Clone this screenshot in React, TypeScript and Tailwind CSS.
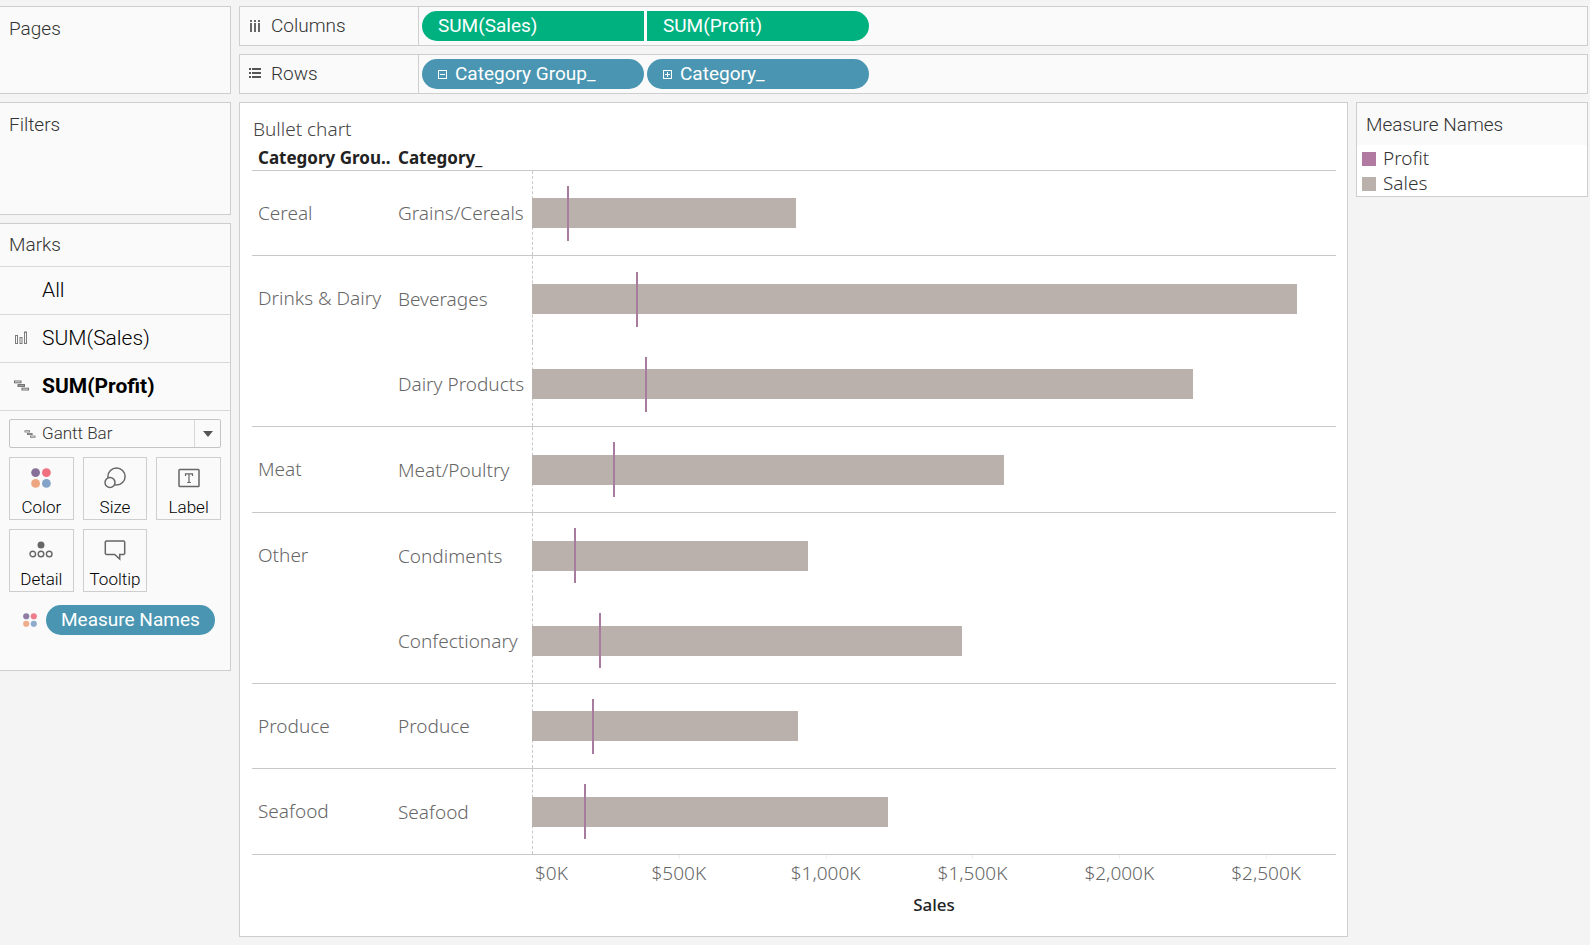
import { useState } from 'react'

const rows = [
  { group: 'Cereal', span: 1, category: 'Grains/Cereals', sales: 899, profit: 119 },
  { group: 'Drinks & Dairy', span: 2, category: 'Beverages', sales: 2605, profit: 354 },
  { group: '', span: 0, category: 'Dairy Products', sales: 2251, profit: 385 },
  { group: 'Meat', span: 1, category: 'Meat/Poultry', sales: 1607, profit: 276 },
  { group: 'Other', span: 2, category: 'Condiments', sales: 940, profit: 143 },
  { group: '', span: 0, category: 'Confectionary', sales: 1464, profit: 228 },
  { group: 'Produce', span: 1, category: 'Produce', sales: 906, profit: 204 },
  { group: 'Seafood', span: 1, category: 'Seafood', sales: 1212, profit: 177 },
]

const AXIS_MAX = 2738
const ticks = [500, 1000, 1500, 2000, 2500]
const pct = (v: number) => `${(v / AXIS_MAX) * 100}%`

function DotsIcon({ className }: { className?: string }) {
  return (
    <svg viewBox="0 0 20 20" className={className} aria-hidden="true">
      <circle cx="4.6" cy="4.6" r="4.4" fill="#86709a" />
      <circle cx="15.4" cy="4.6" r="4.4" fill="#f0707f" />
      <circle cx="4.6" cy="15.4" r="4.4" fill="#eea680" />
      <circle cx="15.4" cy="15.4" r="4.4" fill="#83a3c8" />
    </svg>
  )
}

function SizeIcon() {
  return (
    <svg viewBox="0 0 22 22" className="h-[22px] w-[22px]" fill="#fafafa" stroke="#666" strokeWidth="1.5" aria-hidden="true">
      <circle cx="12.5" cy="9.5" r="8.6" />
      <circle cx="6" cy="15.5" r="5" />
    </svg>
  )
}

function LabelIcon() {
  return (
    <svg viewBox="0 0 22 22" className="h-[22px] w-[22px]" fill="none" stroke="#666" aria-hidden="true">
      <rect x="1" y="2.5" width="20" height="17" rx="0.8" strokeWidth="1.5" />
      <path d="M7.5 9V6.8h7V9M11 6.8v8.7M9.2 15.5h3.6" strokeWidth="1.2" />
    </svg>
  )
}

function DetailIcon() {
  return (
    <svg viewBox="0 0 24 20" className="h-5 w-6" fill="none" stroke="#666" strokeWidth="1.4" aria-hidden="true">
      <circle cx="12" cy="5" r="3.5" fill="#666" stroke="none" />
      <circle cx="3.8" cy="14" r="2.8" />
      <circle cx="12" cy="14" r="2.8" />
      <circle cx="20.2" cy="14" r="2.8" />
    </svg>
  )
}

function TooltipIcon() {
  return (
    <svg viewBox="0 0 22 22" className="h-[22px] w-[22px]" fill="none" stroke="#666" strokeWidth="1.5" aria-hidden="true">
      <path d="M2.5 2h17a1.2 1.2 0 0 1 1.2 1.2v11a1.2 1.2 0 0 1-1.2 1.2h-3.8v4.6l-5-4.6H2.5a1.2 1.2 0 0 1-1.2-1.2v-11A1.2 1.2 0 0 1 2.5 2z" />
    </svg>
  )
}

function BarsIcon() {
  return (
    <svg viewBox="0 0 13 13" className="h-[13px] w-[13px]" fill="#fafafa" stroke="#7c7c7c" aria-hidden="true">
      <rect x="0.5" y="4.5" width="2" height="8" />
      <rect x="5" y="6.5" width="2" height="6" />
      <rect x="9.5" y="1" width="2" height="11.5" />
    </svg>
  )
}

function GanttIcon({ className }: { className?: string }) {
  return (
    <svg viewBox="0 0 15 11" className={className} fill="#fafafa" stroke="#6e6e6e" aria-hidden="true">
      <rect x="0.5" y="1" width="6.5" height="1.8" />
      <rect x="4" y="4.6" width="6.5" height="1.8" fill="#aaa" />
      <rect x="8" y="8.2" width="6.5" height="1.8" />
    </svg>
  )
}

function ColumnsIcon() {
  return (
    <svg viewBox="0 0 12 12" className="h-3 w-3" fill="#666" aria-hidden="true">
      {[1, 5, 9].map(x => (
        <g key={x}>
          <rect x={x} y="0" width="2" height="2" />
          <rect x={x} y="3" width="2" height="9" />
        </g>
      ))}
    </svg>
  )
}

function RowsIcon() {
  return (
    <svg viewBox="0 0 12 12" className="h-3 w-3" fill="#555" aria-hidden="true">
      {[0, 4, 8].map(y => (
        <g key={y}>
          <rect x="0" y={y} width="2" height="2" />
          <rect x="3" y={y} width="9" height="2" />
        </g>
      ))}
    </svg>
  )
}

function ExpandIcon({ open }: { open: boolean }) {
  return (
    <svg viewBox="0 0 9 9" className="h-[9px] w-[9px]" fill="none" stroke="#fff" aria-hidden="true">
      <rect x="0.5" y="0.5" width="8" height="8" />
      <path d={open ? 'M2 4.5h5' : 'M2 4.5h5M4.5 2v5'} />
    </svg>
  )
}

function Shelf({ icon, label, children }: { icon: React.ReactNode; label: string; children: React.ReactNode }) {
  return (
    <section className="flex h-10 border border-[#cecece] bg-[#fafafa]">
      <h2 className="flex w-[179px] items-center gap-[10px] border-r border-[#cecece] pl-[9px]">
        {icon}
        {label}
      </h2>
      <div className="flex items-center gap-[3px] pl-[3px]">{children}</div>
    </section>
  )
}

const markButtons = [
  { label: 'Color', icon: <DotsIcon className="h-5 w-5" /> },
  { label: 'Size', icon: <SizeIcon /> },
  { label: 'Label', icon: <LabelIcon /> },
  { label: 'Detail', icon: <DetailIcon /> },
  { label: 'Tooltip', icon: <TooltipIcon /> },
]

function MarksCard() {
  const [active, setActive] = useState('SUM(Profit)')
  const layers = [
    { label: 'All', icon: null },
    { label: 'SUM(Sales)', icon: <BarsIcon /> },
    { label: 'SUM(Profit)', icon: <GanttIcon className="h-[11px] w-[15px]" /> },
  ]

  return (
    <section className="border border-l-0 border-[#cecece] bg-[#fafafa] pb-[35px]">
      <h2 className="flex h-[42px] items-center pl-[9px]">Marks</h2>
      {layers.map(l => (
        <button
          key={l.label}
          type="button"
          onClick={() => setActive(l.label)}
          className={`flex h-12 w-full items-center border-t border-[#d8d8d8] pb-[2px] text-[21px] text-black ${active === l.label ? 'font-bold' : 'font-light'}`}
        >
          <span className="flex w-[42px] justify-center">{l.icon}</span>
          {l.label}
        </button>
      ))}
      <div className="border-t border-[#d8d8d8] px-[9px] pt-2">
        <div className="relative flex h-[29px] items-center rounded-xs border border-[#c4c4c4]">
          <select
            aria-label="Mark type"
            className="h-full w-full appearance-none bg-transparent pb-px pl-8 text-[17px] font-light text-[#333] outline-none"
          >
            <option>Gantt Bar</option>
          </select>
          <GanttIcon className="pointer-events-none absolute left-[14px] h-2 w-3" />
          <span className="pointer-events-none absolute right-0 flex h-full w-[26px] items-center justify-center border-l border-[#d8d8d8]">
            <svg viewBox="0 0 10 6" className="h-[6px] w-[10px]" fill="#555" aria-hidden="true">
              <path d="M0 0h10L5 6z" />
            </svg>
          </span>
        </div>
        <div className="mt-[9px] grid grid-cols-3 gap-[9px]">
          {markButtons.map(b => (
            <button
              key={b.label}
              type="button"
              className="flex h-[63px] flex-col items-center border border-[#cecece] text-[17px] leading-5 font-light text-black"
            >
              <span className="flex h-[39px] items-center">{b.icon}</span>
              {b.label}
            </button>
          ))}
        </div>
        <div className="mt-[13px] flex items-center gap-[9px] pl-[14px]">
          <DotsIcon className="h-[14px] w-[14px] shrink-0 opacity-90" />
          <button type="button" className="h-[30px] rounded-full bg-[#4a96b2] px-[15px] font-normal whitespace-nowrap text-white">
            Measure Names
          </button>
        </div>
      </div>
    </section>
  )
}

function BulletChart() {
  return (
    <main className="min-w-0 flex-1 border border-[#cecece] bg-white pt-[14px] pr-[11px] pb-[19px] pl-3 font-['Noto_Sans',sans-serif] text-[19px] leading-6 font-light text-[#666]">
      <h1 className="pl-px text-[#444]">Bullet chart</h1>
      <table className="mt-1 w-full table-fixed border-separate border-spacing-0 text-left">
        <thead className="text-[17px] font-medium text-[#222]">
          <tr>
            <th className="h-[26px] w-[140px] border-b border-[#c8c8c8] pl-[6px] whitespace-nowrap">Category Grou..</th>
            <th className="w-[140px] border-b border-[#c8c8c8] pl-[6px]">Category_</th>
            <th className="border-b border-[#c8c8c8]" aria-label="Sales and profit" />
          </tr>
        </thead>
        <tbody>
          {rows.map((r, i) => {
            const last = i === rows.length - 1 || rows[i + 1].span > 0
            const line = last ? 'border-b border-[#c8c8c8]' : ''
            return (
              <tr key={r.category} className="h-[85px] even:h-[86px]">
                {r.span > 0 && (
                  <th rowSpan={r.span} className="border-b border-[#c8c8c8] pl-[6px] align-top font-light">
                    <div className="flex h-[84px] items-center">{r.group}</div>
                  </th>
                )}
                <td className={`pl-[6px] whitespace-nowrap ${line}`}>{r.category}</td>
                <td className={`relative ${line}`}>
                  <span className="absolute inset-y-0 left-0 border-l border-dashed border-[#c8c8c8]" />
                  <div className="relative flex h-[55px] items-center">
                    <div className="h-[30px] bg-[#bab0ac]" style={{ width: pct(r.sales) }} />
                    <span className="absolute inset-y-0 w-[2px] bg-[#a87c9f]" style={{ left: pct(r.profit) }} />
                  </div>
                </td>
              </tr>
            )
          })}
        </tbody>
      </table>
      <div className="relative ml-[280px] h-[38px] pt-[6px]">
        <span className="pl-[3px]">$0K</span>
        {ticks.map(t => (
          <span key={t} className="absolute top-0 -translate-x-1/2 pt-[6px]" style={{ left: pct(t) }}>
            <i className="absolute top-0 left-1/2 h-1 border-l border-[#eee]" />${t.toLocaleString('en-US')}K
          </span>
        ))}
      </div>
      <p className="ml-[280px] text-center text-[17px] font-medium text-[#222]">Sales</p>
    </main>
  )
}

export default function App() {
  const greenPill = 'flex h-[30px] w-[222px] items-center bg-[#00b180] pl-4 text-white font-normal'
  const bluePill = 'flex h-[30px] w-[222px] items-center gap-2 rounded-full bg-[#4a96b2] pl-4 text-white font-normal'

  return (
    <div className="flex min-h-screen items-start gap-2 bg-[#f4f4f4] pt-[6px] pr-[2px] pb-2 font-['Roboto',sans-serif] text-[19px] leading-6 font-light text-[#333]">
      <aside className="flex w-[231px] shrink-0 flex-col gap-2">
        <section className="h-[88px] border border-l-0 border-[#cecece] bg-[#fafafa] pt-[10px] pl-[9px]">
          <h2>Pages</h2>
        </section>
        <section className="h-[113px] border border-l-0 border-[#cecece] bg-[#fafafa] pt-[10px] pl-[9px]">
          <h2>Filters</h2>
        </section>
        <MarksCard />
      </aside>

      <div className="flex min-w-0 flex-1 flex-col gap-2">
        <Shelf icon={<ColumnsIcon />} label="Columns">
          <button type="button" className={`${greenPill} rounded-l-full rounded-r-xs`}>SUM(Sales)</button>
          <button type="button" className={`${greenPill} rounded-l-xs rounded-r-full`}>SUM(Profit)</button>
        </Shelf>
        <Shelf icon={<RowsIcon />} label="Rows">
          <button type="button" className={bluePill}>
            <ExpandIcon open />
            Category Group_
          </button>
          <button type="button" className={bluePill}>
            <ExpandIcon open={false} />
            Category_
          </button>
        </Shelf>

        <div className="flex items-start gap-2">
          <BulletChart />
          <aside className="w-[232px] shrink-0 border border-[#cecece] bg-white">
            <h2 className="h-[42px] bg-[#fafafa] pt-[10px] pl-[9px]">Measure Names</h2>
            <ul className="px-[5px] pt-px font-['Noto_Sans',sans-serif] leading-[25px]">
              <li className="flex items-center gap-[7px]">
                <span className="h-[14px] w-[14px] bg-[#b07aa1]" />
                Profit
              </li>
              <li className="flex items-center gap-[7px]">
                <span className="h-[14px] w-[14px] bg-[#bab0ac]" />
                Sales
              </li>
            </ul>
          </aside>
        </div>
      </div>
    </div>
  )
}
